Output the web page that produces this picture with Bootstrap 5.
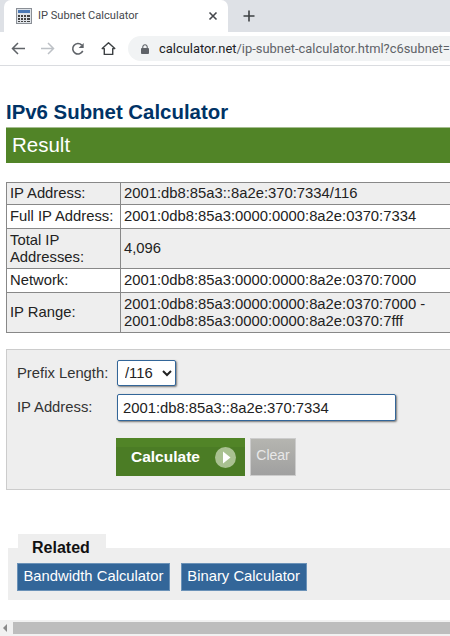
<!DOCTYPE html>
<html lang="en">
<head>
<meta charset="utf-8">
<title>IP Subnet Calculator</title>
<link href="https://cdn.jsdelivr.net/npm/bootstrap@5.3.0/dist/css/bootstrap.min.css" rel="stylesheet">
<style>
html,body{margin:0;width:450px;height:636px;overflow:hidden;background:#fff}
body{font-family:"Liberation Sans",Arial,sans-serif;font-size:14.8px;color:#222}
.shell{width:450px;height:636px;overflow:hidden}
.tabstrip{height:32px;background:#dee1e6;padding-left:4px}
.tabcard{width:224px;height:32px;background:#fff;border-radius:7px 7px 0 0;padding:0 10px 0 12px;font-family:Roboto,"Open Sans",sans-serif;font-size:11.1px;color:#45484d}
.tabcard svg{flex:none}
.tabname{margin-left:6px}
.tabclose{margin-left:auto}
.newtab{margin-left:15px}
.toolbar{height:34px;background:#fff;border-bottom:1px solid #dadce0;padding-left:11px}
.navbtn{width:30px;height:24px;flex:none}
.homebtn{width:27px}
.urlbox{height:25px;width:322px;flex:none;background:#f1f3f4;border-radius:13px 0 0 13px;padding-left:13px;font-family:Roboto,"Open Sans",sans-serif;font-size:12.9px;white-space:nowrap;overflow:hidden}
.urlbox svg{flex:none}
.urlhost{color:#202124;margin-left:10px}
.urlpath{color:#5f6368}
.pagebody{width:640px;padding-left:6px}
.pagetitle{margin:35px 0 0;height:26px;font-size:20.4px;line-height:22px;font-weight:700;color:#003366}
.resulthead{height:36px;background:#518427;border-top:1px solid #a5bd90;color:#fff;font-size:20.5px;line-height:33px;padding-left:6px}
.restable{margin-top:19px;border-collapse:collapse;width:640px;border:1px solid #888;font-size:14.8px;line-height:17px;color:#222}
.restable td{border:1px solid #888;padding:0 3px;vertical-align:middle}
.restable tr:nth-child(odd){background:#eee}
.restable td:first-child{width:114px}
.h1row{height:22px}
.h1wide{height:24px}
.h2row{height:40px}
.calcbox{margin-top:16px;height:141px;background:#eee;border:1px solid #ccc;padding:10px 0 0 10px}
.formrow{align-items:center}
.lbl{width:100px;flex:none;color:#333}
.prefix{width:59px;height:26px;padding:0 0 0 3px;font-size:14.8px;font-family:inherit;color:#222;background:#fff;border:1px solid #336699;border-radius:2px;box-shadow:1px 1px 2px #777}
.addr{width:279px;height:27px;margin-top:8px;padding:0 5px;font-size:14.8px;font-family:inherit;color:#222;background:#fff;border:1px solid #336699;border-radius:2px;box-shadow:1px 1px 2px #777}
.btnrow{margin:17px 0 0 99px;gap:5px}
.calcbtn{width:129px;height:38px;border-radius:0;border:0;padding:0 0 0 15px;background:linear-gradient(#518427 0 9px,#4b7c25 9px 100%);color:#fff;font-weight:700;font-size:15.5px;font-family:inherit;gap:15px}
.playdot{width:21px;height:21px;flex:none}
.clearbtn{width:46px;height:38px;border-radius:0;border:1px solid #ccc;padding:0 0 3px;background:linear-gradient(#b5b5b0,#a0a0a0);color:#e8e8e8;font-size:14px;font-family:inherit}
.relatedwrap{margin:44px 0 0 2px;width:640px}
.reltab{margin-left:10px;width:88px;height:14px;background:#eee;position:relative}
.relname{position:absolute;left:14px;top:5px;font-weight:700;font-size:16px;line-height:18px;color:#111}
.relbox{height:52px;background:#eee;padding:15px 0 0 9px;gap:11px}
.rellink{height:28px;background:#336699;border:1px solid #6b92b8;border-radius:0;color:#fff;font-size:14.8px;padding:0 5.5px;line-height:25px;text-decoration:none}
.hscroll{margin-top:20px;height:16px;background:#f1f1f1;padding:2px 0 2px 13px;position:relative}
.hthumb{height:12px;background:#bdbdbd;width:100%}
.harrow{position:absolute;left:3px;top:4px}
</style>
</head>
<body>
<div class="shell">
  <div class="tabstrip">
    <div class="d-flex align-items-center h-100">
      <div class="tabcard d-flex align-items-center">
        <svg width="16" height="16" viewBox="0 0 16 16"><rect x=".5" y=".5" width="15" height="15" fill="#dfe3e8" stroke="#8a8f96"/><rect x="2" y="2" width="12" height="3" fill="#4a78b5"/><g fill="#444"><rect x="2" y="7" width="2" height="2"/><rect x="5" y="7" width="2" height="2"/><rect x="8" y="7" width="2" height="2"/><rect x="11" y="7" width="3" height="2"/><rect x="2" y="10" width="2" height="2"/><rect x="5" y="10" width="2" height="2"/><rect x="8" y="10" width="2" height="2"/><rect x="11" y="10" width="3" height="2"/><rect x="2" y="13" width="2" height="1"/><rect x="5" y="13" width="2" height="1"/><rect x="8" y="13" width="2" height="1"/><rect x="11" y="13" width="3" height="1"/></g></svg>
        <span class="tabname">IP Subnet Calculator</span>
        <svg class="tabclose" width="10" height="10" viewBox="0 0 10 10"><path d="M1.5 1.5l7 7M8.5 1.5l-7 7" stroke="#45484d" stroke-width="1.6"/></svg>
      </div>
      <svg class="newtab" width="12" height="12" viewBox="0 0 12 12"><path d="M6 .5v11M.5 6h11" stroke="#3c4043" stroke-width="1.6"/></svg>
    </div>
  </div>
  <div class="toolbar d-flex align-items-center">
    <div class="navbtn d-flex align-items-center"><svg width="14" height="13" viewBox="0 0 14 13"><path d="M14 6.5H1.5M7 1L1.5 6.5 7 12" fill="none" stroke="#5f6368" stroke-width="1.5"/></svg></div>
    <div class="navbtn d-flex align-items-center"><svg width="14" height="13" viewBox="0 0 14 13"><path d="M0 6.5h12.5M7 1l5.5 5.5L7 12" fill="none" stroke="#bdc1c6" stroke-width="1.5"/></svg></div>
    <div class="navbtn d-flex align-items-center"><svg width="14" height="14" viewBox="0 0 15 15"><path d="M12.6 9.5A5.6 5.6 0 1 1 11.5 3.4" fill="none" stroke="#5f6368" stroke-width="1.7"/><path d="M13.6 1v5.4H8.2z" fill="#5f6368"/></svg></div>
    <div class="navbtn homebtn d-flex align-items-center"><svg width="15" height="15" viewBox="0 0 16 15"><path d="M8 1.3L1.3 7.6H3.5v6.2h9V7.6h2.2z" fill="none" stroke="#3c4043" stroke-width="1.5" stroke-linejoin="round"/></svg></div>
    <div class="urlbox d-flex align-items-center">
      <svg width="8" height="10" viewBox="0 0 9 11"><path d="M2 5V3.2a2.5 2.5 0 0 1 5 0V5" fill="none" stroke="#5f6368" stroke-width="1.2"/><rect y="4.5" width="9" height="6.5" rx="1" fill="#5f6368"/></svg>
      <span class="urlhost">calculator.net</span><span class="urlpath">/ip-subnet-calculator.html?c6subnet=</span>
    </div>
  </div>
  <div class="pagebody">
    <h1 class="pagetitle">IPv6 Subnet Calculator</h1>
    <div class="resulthead">Result</div>
    <table class="restable">
      <tr class="h1row"><td>IP Address:</td><td>2001:db8:85a3::8a2e:370:7334/116</td></tr>
      <tr class="h1wide"><td>Full IP Address:</td><td>2001:0db8:85a3:0000:0000:8a2e:0370:7334</td></tr>
      <tr class="h2row"><td>Total IP Addresses:</td><td>4,096</td></tr>
      <tr class="h1wide"><td>Network:</td><td>2001:0db8:85a3:0000:0000:8a2e:0370:7000</td></tr>
      <tr class="h2row"><td>IP Range:</td><td>2001:0db8:85a3:0000:0000:8a2e:0370:7000 -<br>2001:0db8:85a3:0000:0000:8a2e:0370:7fff</td></tr>
    </table>
    <div class="calcbox">
      <div class="d-flex formrow">
        <label class="lbl" for="pfx">Prefix Length:</label>
        <select id="pfx" class="prefix"><option>/116</option></select>
      </div>
      <div class="d-flex formrow">
        <label class="lbl mt-2" for="adr">IP Address:</label>
        <input id="adr" class="addr" type="text" value="2001:db8:85a3::8a2e:370:7334">
      </div>
      <div class="d-flex btnrow">
        <button type="button" class="btn calcbtn d-flex align-items-center">Calculate
          <svg class="playdot" viewBox="0 0 21 21"><circle cx="10.5" cy="10.5" r="10.5" fill="#a9c191"/><path d="M8 4.5l7.5 6-7.5 6z" fill="#fff"/></svg>
        </button>
        <button type="button" class="btn clearbtn">Clear</button>
      </div>
    </div>
    <div class="relatedwrap">
      <div class="reltab"><span class="relname">Related</span></div>
      <div class="relbox d-flex align-items-start">
        <a class="rellink" href="#">Bandwidth Calculator</a>
        <a class="rellink" href="#">Binary Calculator</a>
      </div>
    </div>
  </div>
  <div class="hscroll">
    <svg class="harrow" width="5" height="8" viewBox="0 0 5 8"><path d="M4 0v8L0 4z" fill="#8a8a8a"/></svg>
    <div class="hthumb"></div>
  </div>
</div>
<script src="https://cdn.jsdelivr.net/npm/bootstrap@5.3.0/dist/js/bootstrap.bundle.min.js"></script>
</body>
</html>
